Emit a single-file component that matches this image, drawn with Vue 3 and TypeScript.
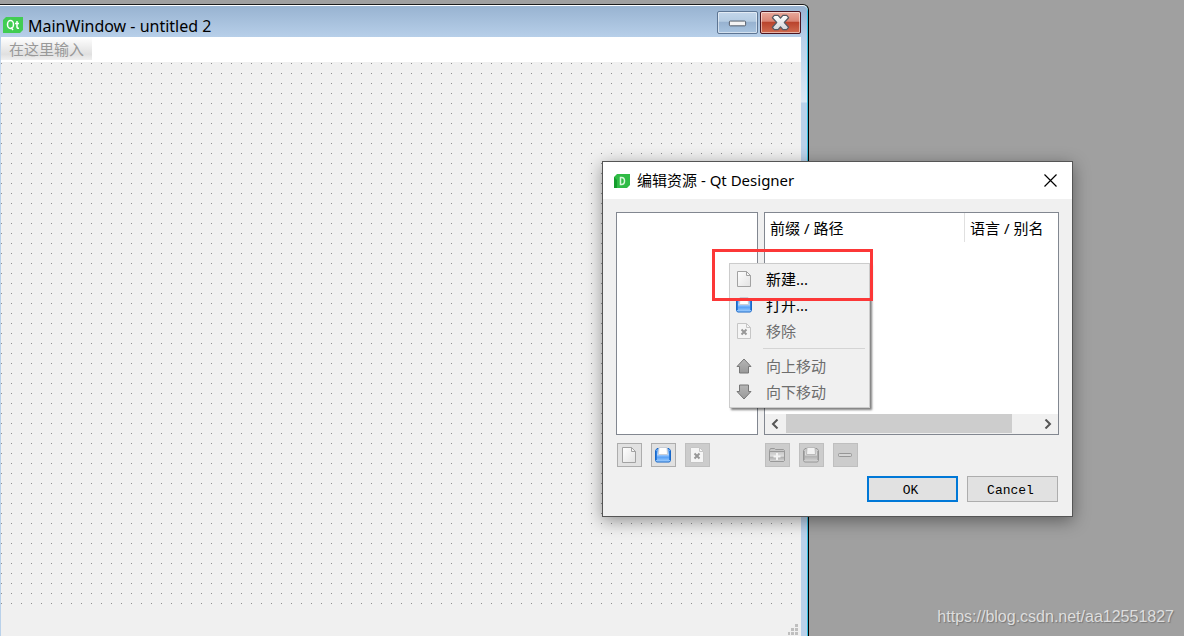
<script setup lang="ts">
import { ref } from 'vue'

interface MenuAction {
  icon: string
  label: string
  disabled: boolean
}

interface ToolAction {
  icon: string
  title: string
  disabled: boolean
}

const fileActions: MenuAction[] = [
  { icon: 'new', label: '新建...', disabled: false },
  { icon: 'open', label: '打开...', disabled: false },
  { icon: 'remove', label: '移除', disabled: true },
]
const moveActions: MenuAction[] = [
  { icon: 'up', label: '向上移动', disabled: true },
  { icon: 'down', label: '向下移动', disabled: true },
]
const fileTools: ToolAction[] = [
  { icon: 'new', title: '新建', disabled: false },
  { icon: 'open', title: '打开', disabled: false },
  { icon: 'remove', title: '移除', disabled: true },
]
const prefixTools: ToolAction[] = [
  { icon: 'folder', title: '添加前缀', disabled: true },
  { icon: 'openoff', title: '添加文件', disabled: true },
  { icon: 'minus', title: '移除', disabled: true },
]
const columns = ref<string[]>(['前缀 / 路径', '语言 / 别名'])
</script>

<template>
  <main class="desktop">
    <svg class="defs" aria-hidden="true">
      <defs>
        <linearGradient id="paper" x1="0" y1="0" x2="1" y2="1">
          <stop offset="0" stop-color="#fff" /><stop offset="1" stop-color="#e2e2e2" />
        </linearGradient>
        <linearGradient id="blue" x1="0" y1="0" x2="0" y2="1">
          <stop offset="0" stop-color="#4d94e8" /><stop offset=".45" stop-color="#a9d0ff" /><stop offset=".65" stop-color="#5aa2f6" /><stop offset="1" stop-color="#a6d2ff" />
        </linearGradient>
        <linearGradient id="grey" x1="0" y1="0" x2="0" y2="1">
          <stop offset="0" stop-color="#c4c4c4" /><stop offset=".45" stop-color="#dcdcdc" /><stop offset=".6" stop-color="#b2b2b2" /><stop offset="1" stop-color="#dadada" />
        </linearGradient>
        <linearGradient id="arrow" x1="0" y1="0" x2="0" y2="1">
          <stop offset="0" stop-color="#b6b6b6" /><stop offset="1" stop-color="#999" />
        </linearGradient>
        <linearGradient id="cross" x1="0" y1="0" x2="0" y2="1">
          <stop offset="0" stop-color="#fff" /><stop offset="1" stop-color="#d2d4d8" />
        </linearGradient>
      </defs>
      <symbol id="i-new" viewBox="0 0 16 16">
        <path d="M1.500.5h9l4 4v11h-13z" fill="url(#paper)" stroke="#a2a2a2" />
        <path d="M10.500.5v4h4z" fill="#f7f7f7" stroke="#a2a2a2" />
      </symbol>
      <symbol id="i-open" viewBox="0 0 16 16">
        <path d="M.5 3.500l1.500-2h12l1.500 2v10l-1 1.500h-13l-1-1.500z" fill="url(#blue)" stroke="#1767c8" />
        <path d="M1.500 4v9M14.500 4v9" stroke="#2b7cdc" />
        <path d="M3.500 7.500l.5-7h8l.5 7z" fill="#fff" stroke="#c9ced6" />
      </symbol>
      <symbol id="i-openoff" viewBox="0 0 16 16">
        <path d="M.5 3.500l1.500-2h12l1.500 2v10l-1 1.500h-13l-1-1.500z" fill="url(#grey)" stroke="#969696" />
        <path d="M1.500 4v9M14.500 4v9" stroke="#aaa" />
        <path d="M3.500 7.500l.5-7h8l.5 7z" fill="#f2f2f2" stroke="#bbb" />
      </symbol>
      <symbol id="i-remove" viewBox="0 0 16 16">
        <path d="M1.500.5h9l4 4v11h-13z" fill="#f5f5f5" stroke="#c6c6c6" />
        <path d="M10.500.5v4h4" fill="none" stroke="#c6c6c6" />
        <path d="M5.500 6.500l5 5m0-5l-5 5" stroke="#989898" stroke-width="2" />
      </symbol>
      <symbol id="i-up" viewBox="0 0 16 16">
        <path d="M8 1L15 8.500h-2.500V15h-9V8.500H1z" fill="url(#arrow)" stroke="#777" stroke-linejoin="round" />
      </symbol>
      <symbol id="i-down" viewBox="0 0 16 16">
        <path d="M3.500 1h9v6.500H15L8 15 1 7.500h2.500z" fill="url(#arrow)" stroke="#777" stroke-linejoin="round" />
      </symbol>
      <symbol id="i-folder" viewBox="0 0 16 16">
        <path d="M.5 13.500v-10l1-2h4l1 1h8l1 1v10l-1 1h-13z" fill="#c6c6c6" stroke="#999" />
        <path d="M.5 4.500h15v9l-1 1h-13l-1-1z" fill="url(#grey)" stroke="#999" />
        <path d="M8 6v7M4.500 9.500h7" stroke="#f3f3f3" stroke-width="2" />
      </symbol>
      <symbol id="i-minus" viewBox="0 0 16 16">
        <rect x="1.500" y="6.500" width="13" height="3" rx="1" fill="#d5d5d5" stroke="#969696" />
      </symbol>
    </svg>

    <section class="form-window">
      <header class="aero-bar">
        <svg class="qt" viewBox="0 0 20 16" aria-hidden="true">
          <path d="M3 0h17v13l-3 3H0V3z" fill="#41cd52" />
          <ellipse cx="7.500" cy="7.500" rx="3" ry="4" fill="none" stroke="#fff" stroke-width="1.500" />
          <path d="M8 10.500l2 2.500M14 4v6q0 1.500 2 1.300M12 6.500h4" fill="none" stroke="#fff" stroke-width="1.500" />
        </svg>
        <h1>MainWindow - untitled 2</h1>
        <button class="aero min" aria-label="最小化">
          <svg viewBox="0 0 40 22"><rect x="11.500" y="9.500" width="17" height="5" rx="1" fill="#f4f4f4" stroke="#4f5764" /></svg>
        </button>
        <button class="aero shut" aria-label="关闭">
          <svg viewBox="0 0 40 22">
            <path d="M13.500 3.500h4l2.500 3 2.500-3h4l2 2.500-4.500 5 4.500 5-2 2.500h-4l-2.500-3-2.500 3h-4l-2-2.500 4.500-5-4.500-5z" fill="url(#cross)" stroke="#565962" stroke-width="1.300" stroke-linejoin="round" />
          </svg>
        </button>
      </header>
      <div class="form-body">
        <nav class="menubar"><button class="type-here">在这里输入</button></nav>
        <div class="canvas"><div class="grid"></div></div>
        <div class="status">
          <svg viewBox="0 0 12 12" width="12" height="12" aria-hidden="true">
            <path d="M8 0h3v3H8zM4 4h3v3H4zM8 4h3v3H8zM1 8h2v3H1zM4 8h3v3H4zM8 8h3v3H8z" fill="#bfbfbf" />
          </svg>
        </div>
      </div>
    </section>

    <section class="dialog" role="dialog" aria-labelledby="dialog-title">
      <header class="dialog-bar">
        <svg class="designer" viewBox="0 0 16 14" aria-hidden="true">
          <path d="M3 0h13v11l-3 3H0V3z" fill="#2fbb45" />
          <path d="M0 3l3 3v8H0z" fill="#149c2c" />
          <path d="M6.500 3.500v7h1q3 0 3-3.500t-3-3.500z" fill="none" stroke="#d9f7dc" stroke-width="1.500" />
        </svg>
        <h2 id="dialog-title">编辑资源 - Qt Designer</h2>
        <button class="close" aria-label="关闭">
          <svg viewBox="0 0 13 13" width="13" height="13"><path d="M.5.5l12 12m0-12l-12 12" stroke="#000" stroke-width="1.200" /></svg>
        </button>
      </header>
      <div class="dialog-body">
        <div class="panes">
          <div class="left">
            <div class="list"></div>
            <div class="tools">
              <button v-for="t in fileTools" :key="t.icon" :disabled="t.disabled" :aria-label="t.title">
                <svg width="16" height="16"><use :href="'#i-' + t.icon" /></svg>
              </button>
            </div>
          </div>
          <div class="right">
            <div class="tree">
              <table>
                <thead>
                  <tr><th v-for="c in columns" :key="c" scope="col">{{ c }}</th></tr>
                </thead>
              </table>
              <div class="scroll">
                <button aria-label="向左滚动"><svg viewBox="0 0 8 10" width="8" height="10"><path d="M6.500 .5L2 5l4.500 4.500" fill="none" stroke="#555" stroke-width="2" /></svg></button>
                <div class="track"><div class="thumb"></div></div>
                <button aria-label="向右滚动"><svg viewBox="0 0 8 10" width="8" height="10"><path d="M1.500 .5L6 5 1.500 9.500" fill="none" stroke="#555" stroke-width="2" /></svg></button>
              </div>
            </div>
            <div class="tools">
              <button v-for="t in prefixTools" :key="t.icon" :disabled="t.disabled" :aria-label="t.title">
                <svg width="16" height="16"><use :href="'#i-' + t.icon" /></svg>
              </button>
            </div>
          </div>
        </div>
        <footer>
          <button class="push default">OK</button>
          <button class="push">Cancel</button>
        </footer>
      </div>
    </section>

    <div class="menu" role="menu">
      <button v-for="a in fileActions" :key="a.icon" role="menuitem" :disabled="a.disabled">
        <svg width="16" height="16"><use :href="'#i-' + a.icon" /></svg>{{ a.label }}
      </button>
      <hr />
      <button v-for="a in moveActions" :key="a.icon" role="menuitem" :disabled="a.disabled">
        <svg width="16" height="16"><use :href="'#i-' + a.icon" /></svg>{{ a.label }}
      </button>
    </div>
    <div class="highlight"></div>
    <a class="credit" href="https://blog.csdn.net/aa12551827">https://blog.csdn.net/aa12551827</a>
  </main>
</template>

<style>
body {
  margin: 0;
}
</style>

<style scoped>
* {
  box-sizing: border-box;
}
.desktop {
  position: relative;
  height: 100vh;
  overflow: hidden;
  background: #a0a0a0;
  color: #000;
  font: 15px/20px "Noto Sans", "Noto Sans CJK SC", sans-serif;
}
.defs {
  position: absolute;
  width: 0;
  height: 0;
}
button {
  margin: 0;
  padding: 0;
  border: 0;
  background: none;
  color: inherit;
  font: inherit;
}
h1,
h2 {
  margin: 0;
  flex: 1;
  font-weight: 400;
}
.form-window {
  position: absolute;
  left: 0;
  top: 4px;
  bottom: 0;
  width: 809px;
  display: flex;
  flex-direction: column;
  border-top: 1px solid #1b1b1b;
  border-right: 1px solid #000;
  border-radius: 0 6px 0 0;
  background: linear-gradient(#b7cfe9 32px, #dbe8f5 97px, #b9d1ea 98px);
  box-shadow: inset 0 1px #fff, inset -1px 0 #35c0e2;
}
.aero-bar {
  display: flex;
  align-items: center;
  height: 31px;
  margin: 1px 1px 0 0;
  padding: 0 6px 0 3px;
  border-radius: 0 5px 0 0;
  background: linear-gradient(#98b3d1, #b7cfe9);
}
.aero-bar h1 {
  padding: 8px 0 0 5px;
  font-size: 16px;
  line-height: 20px;
}
.qt {
  width: 20px;
  height: 16px;
  margin-top: 7px;
}
.aero {
  display: flex;
  align-self: flex-start;
  width: 41px;
  height: 23px;
  margin: 5px 0 0 2px;
  border: 1px solid #5d7593;
  border-radius: 2px;
  box-shadow: inset 0 0 0 1px rgba(255, 255, 255, 0.5);
}
.aero svg {
  width: 100%;
  height: 100%;
}
.min {
  background: linear-gradient(#c3d6ea, #b4cbe2 45%, #96b1cf 46%, #a8c4e0);
}
.shut {
  border-color: #4b1420;
  background: linear-gradient(#e9a99c, #d98474 45%, #b8412b 46%, #d06b50);
}
.form-body {
  display: flex;
  flex: 1;
  flex-direction: column;
  margin: 0 7px 0 1px;
  background: #f0f0f0;
}
.menubar {
  display: flex;
  height: 25px;
  background: #fff;
}
.type-here {
  width: 91px;
  height: 23px;
  padding-top: 2px;
  background: linear-gradient(#fff, #e0e0e0 75%, #f0f0f0);
  color: #999;
  line-height: 21px;
}
.canvas {
  flex: 1;
}
.grid {
  height: 543px;
  background: conic-gradient(at 1px 1px, #f0f0f0 0 75%, #8f8f8f 0) 0 1px / 10px 10px;
}
.status {
  display: flex;
  justify-content: flex-end;
  padding-right: 2px;
}
.dialog {
  position: absolute;
  left: 602px;
  top: 161px;
  width: 471px;
  border: 1px solid #555;
  background: #f0f0f0;
  box-shadow: 0 4px 16px rgba(0, 0, 0, 0.4);
}
.dialog-bar {
  display: flex;
  align-items: center;
  height: 37px;
  padding: 0 15px 0 11px;
  background: #fff;
}
.dialog-bar h2 {
  padding: 0 0 2px 7px;
  font-size: 15px;
}
.designer {
  width: 16px;
  height: 14px;
}
.close {
  display: flex;
}
.dialog-body {
  padding: 13px 13px 14px;
}
.panes {
  display: flex;
  gap: 6px;
}
.left {
  width: 142px;
}
.right {
  flex: 1;
}
.list,
.tree {
  height: 223px;
  border: 1px solid #828790;
  background: #fff;
}
.tree {
  display: flex;
  flex-direction: column;
  justify-content: space-between;
}
table {
  width: 100%;
  border-spacing: 0;
  table-layout: fixed;
}
th {
  height: 29px;
  padding: 0 5px;
  font-weight: 400;
  text-align: left;
}
th:first-child {
  width: 200px;
  border-right: 1px solid #e0e0e0;
}
.scroll {
  display: flex;
  height: 20px;
  background: #f0f0f0;
}
.scroll button {
  display: flex;
  width: 21px;
  align-items: center;
  justify-content: center;
  padding: 0 2px 1px 0;
}
.scroll button:last-child {
  padding: 0 0 1px;
}
.track {
  flex: 1;
  padding-bottom: 1px;
}
.thumb {
  width: 90%;
  height: 100%;
  background: #cdcdcd;
}
.tools {
  display: flex;
  gap: 9px;
  padding: 8px 1px 0;
}
.tools button {
  display: flex;
  width: 25px;
  height: 24px;
  align-items: center;
  justify-content: center;
  padding-right: 1px;
  border: 1px solid #adadad;
  background: #e1e1e1;
}
.tools button:disabled {
  border-color: #bfbfbf;
  background: #ccc;
}
footer {
  display: flex;
  justify-content: flex-end;
  gap: 9px;
  padding: 9px 1px 0 0;
}
.push {
  width: 91px;
  height: 26px;
  border: 1px solid #adadad;
  background: #e1e1e1;
  padding-top: 3px;
  padding-right: 4px;
  font: 13px/20px "Liberation Mono", monospace;
}
.default {
  border: 2px solid #0078d7;
}
.menu {
  position: absolute;
  left: 729px;
  top: 263px;
  width: 141px;
  padding: 2px;
  border: 1px solid #ccc;
  background: #f0f0f0;
  box-shadow: 2px 2px 2px rgba(0, 0, 0, 0.5);
}
.menu button {
  display: flex;
  width: 100%;
  height: 26px;
  align-items: center;
  gap: 14px;
  padding-left: 4px;
}
.menu button:disabled {
  color: #6d6d6d;
}
.menu hr {
  height: 1px;
  margin: 4px 2px 4px 31px;
  border: 0;
  background: #d4d4d4;
}
.highlight {
  position: absolute;
  left: 712px;
  top: 249px;
  width: 161px;
  height: 52px;
  border: 3px solid #fc3737;
  pointer-events: none;
}
.credit {
  position: absolute;
  right: 10px;
  bottom: 9px;
  color: #dedede;
  font: 16px/20px "Liberation Sans", Arial, sans-serif;
  text-decoration: none;
  text-shadow: 1px 1px 1px #777;
}
</style>
